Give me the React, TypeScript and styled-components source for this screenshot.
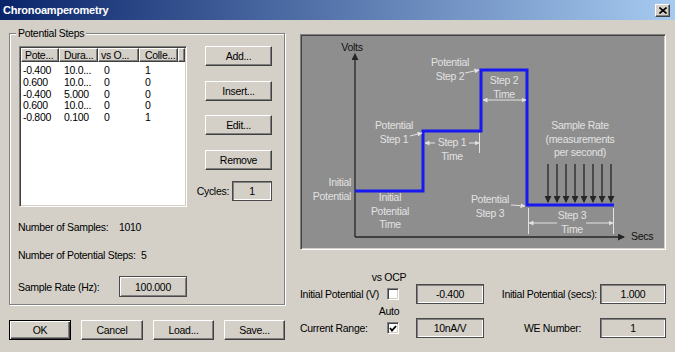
import React from 'react'
import styled, { createGlobalStyle } from 'styled-components'

const FACE = '#d4d0c8'

const GlobalStyle = createGlobalStyle`
  html, body {
    margin: 0;
    padding: 0;
    background: ${FACE};
  }
  body {
    font-family: 'Liberation Sans', Arial, sans-serif;
    font-size: 10.5px;
    letter-spacing: -0.3px;
    color: #000;
  }
`

const Window = styled.div`
  width: 675px;
  height: 352px;
  overflow: hidden;
  background: ${FACE};
  display: flex;
  flex-direction: column;
`

const TitleBar = styled.div`
  flex: none;
  height: 20px;
  display: flex;
  align-items: center;
  justify-content: space-between;
  padding: 0 5px 0 3px;
  background: linear-gradient(90deg, #0a246a 0%, #a6caf0 100%);
`

const Title = styled.span`
  color: #fff;
  font-weight: bold;
  font-size: 11px;
  letter-spacing: -0.2px;
`

const CloseBox = styled.div`
  width: 15px;
  height: 13px;
  box-sizing: border-box;
  display: flex;
  align-items: center;
  justify-content: center;
  background: ${FACE};
  border: 1px solid;
  border-color: #fff #404040 #404040 #fff;
  box-shadow: inset -1px -1px 0 #808080;
`

const Body = styled.div`
  display: flex;
  gap: 15px;
  padding: 13px 0 0 9px;
`

const LeftCol = styled.div`
  width: 276px;
  display: flex;
  flex-direction: column;
`

const GroupBox = styled.div`
  position: relative;
  height: 272px;
  box-sizing: border-box;
  padding: 12px 0 0 9px;
  border: 1px solid #808080;
  box-shadow: inset 1px 1px 0 #fff, 1px 1px 0 #fff;
`

const Legend = styled.span`
  position: absolute;
  top: -7px;
  left: 6px;
  padding: 0 2px;
  line-height: 13px;
  background: ${FACE};
`

const GroupTop = styled.div`
  display: flex;
  align-items: flex-start;
`

const ListView = styled.div`
  width: 168px;
  height: 161px;
  box-sizing: border-box;
  background: #fff;
  border: 1px solid;
  border-color: #808080 #fff #fff #808080;
  box-shadow: inset 1px 1px 0 #404040, inset -1px -1px 0 ${FACE};
  padding: 1px;
  overflow: hidden;
`

const COLS = '38px 39px 41px 39px 1fr'

const HeaderRow = styled.div`
  display: grid;
  grid-template-columns: ${COLS};
  height: 14px;
`

const HeaderCell = styled.div<{ $pad: number }>`
  box-sizing: border-box;
  padding-left: ${(p) => p.$pad}px;
  line-height: 12px;
  white-space: nowrap;
  overflow: hidden;
  background: ${FACE};
  border: 1px solid;
  border-color: #fff #404040 #404040 #fff;
  box-shadow: inset -1px -1px 0 #808080;
`

const Rows = styled.div`
  padding-top: 3px;
`

const DataRow = styled.div`
  display: grid;
  grid-template-columns: ${COLS};
  height: 11.75px;
  line-height: 11.75px;
`

const DataCell = styled.div<{ $pad: number }>`
  padding-left: ${(p) => p.$pad}px;
  white-space: nowrap;
`

const ButtonCol = styled.div`
  width: 67px;
  margin-left: 18px;
  display: flex;
  flex-direction: column;
`

const ButtonStack = styled.div`
  display: flex;
  flex-direction: column;
  gap: 14.5px;
`

const Button = styled.div<{ $default?: boolean; $width?: number }>`
  width: ${(p) => (p.$width ? `${p.$width}px` : '100%')};
  height: 20px;
  box-sizing: border-box;
  display: flex;
  align-items: center;
  justify-content: center;
  background: ${FACE};
  border: 1px solid;
  border-color: ${(p) => (p.$default ? '#000' : '#fff #404040 #404040 #fff')};
  box-shadow: ${(p) =>
    p.$default
      ? 'inset 1px 1px 0 #fff, inset -1px -1px 0 #404040, inset -2px -2px 0 #808080'
      : 'inset -1px -1px 0 #808080'};
`

const CyclesRow = styled.div`
  margin-top: 11px;
  display: flex;
  align-items: center;
  justify-content: flex-end;
  gap: 3px;
  & > * {
    flex: none;
  }
`

const Field = styled.div<{ $width?: number; $raised?: boolean }>`
  width: ${(p) => (p.$width ? `${p.$width}px` : '100%')};
  height: ${(p) => (p.$raised ? 21 : 20)}px;
  box-sizing: border-box;
  display: flex;
  align-items: center;
  justify-content: center;
  background: ${FACE};
  border: 1px solid #4a4a4a;
  box-shadow: ${(p) =>
    p.$raised
      ? 'inset 1px 1px 0 #fff, inset -1px -1px 0 #808080'
      : 'inset 1px 1px 0 #808080, inset -1px -1px 0 #fff'};
`

const StatList = styled.div`
  margin: 13px 0 0 -1px;
  display: flex;
  flex-direction: column;
  gap: 14px;
`

const StatRow = styled.div<{ $h: number }>`
  height: ${(p) => p.$h}px;
  display: flex;
  align-items: center;
`

const StatLabel = styled.span`
  width: 101px;
  flex: none;
`

const Footer = styled.div`
  margin-top: 15px;
  display: flex;
  justify-content: space-between;
`

const RightCol = styled.div`
  width: 366px;
  padding-top: 1px;
  display: flex;
  flex-direction: column;
`

const DiagramPanel = styled.div`
  height: 216px;
  box-sizing: border-box;
  background: #8e8e8e;
  border: 1px solid;
  border-color: #808080 #fff #fff #808080;
  box-shadow: inset 1px 1px 0 #404040, inset -1px -1px 0 ${FACE};
  & > svg {
    display: block;
    margin: 1px;
  }
`

const FormGrid = styled.div`
  margin-top: 22px;
  display: grid;
  grid-template-columns: 82px 34px 68px 1fr 66px;
  grid-template-rows: 12px 20px 14px 20px;
  align-items: center;
`

const Caption = styled.div<{ $row: number }>`
  grid-column: 2;
  grid-row: ${(p) => p.$row};
  width: 14px;
  display: flex;
  justify-content: center;
  white-space: nowrap;
  line-height: 13px;
  align-self: end;
`

const FormLabel = styled.div<{ $col: number; $row: number; $pad?: number }>`
  grid-column: ${(p) => p.$col};
  grid-row: ${(p) => p.$row};
  white-space: nowrap;
  text-align: ${(p) => (p.$col === 1 ? 'left' : 'right')};
  padding-right: ${(p) => p.$pad ?? 0}px;
`

const Check = styled.div<{ $row: number }>`
  grid-column: 2;
  grid-row: ${(p) => p.$row};
  margin-left: 5px;
  width: 12px;
  height: 12px;
  box-sizing: border-box;
  background: #fff;
  border: 1px solid;
  border-color: #808080 #fff #fff #808080;
  box-shadow: inset 1px 1px 0 #404040, inset -1px -1px 0 ${FACE};
  display: flex;
  align-items: center;
  justify-content: center;
`

const Slot = styled.div<{ $col: number; $row: number }>`
  grid-column: ${(p) => p.$col};
  grid-row: ${(p) => p.$row};
`

const steps = [
  ['-0.400', '10.0...', '0', '1'],
  ['0.600', '10.0...', '0', '0'],
  ['-0.400', '5.000', '0', '0'],
  ['0.600', '10.0...', '0', '0'],
  ['-0.800', '0.100', '0', '1'],
]

const headers = [
  { label: 'Pote...', pad: 3 },
  { label: 'Dura...', pad: 4 },
  { label: 'vs O...', pad: 2 },
  { label: 'Colle...', pad: 5 },
  { label: '', pad: 0 },
]

const dataPads = [2, 5, 6, 6]

const LIGHT = '#e2e2e2'
const DARK = '#262626'

interface LabelProps {
  x: number
  y: number
  lines: string[]
  anchor?: 'start' | 'middle' | 'end'
  fill?: string
}

const DiagramText = ({ x, y, lines, anchor = 'middle', fill = LIGHT }: LabelProps) => (
  <text
    x={x}
    y={y}
    textAnchor={anchor}
    fill={fill}
    fontFamily="'Liberation Sans', Arial, sans-serif"
    fontSize="10.5"
    letterSpacing="-0.3"
  >
    {lines.map((line, i) => (
      <tspan key={i} x={x} dy={i === 0 ? 0 : 13.7}>
        {line}
      </tspan>
    ))}
  </text>
)

const Arrow = ({
  x1,
  y1,
  x2,
  y2,
  color = LIGHT,
}: {
  x1: number
  y1: number
  x2: number
  y2: number
  color?: string
}) => (
  <line
    x1={x1}
    y1={y1}
    x2={x2}
    y2={y2}
    stroke={color}
    strokeWidth={color === LIGHT ? 1 : 1.3}
    markerEnd={color === LIGHT ? 'url(#ah-light)' : 'url(#ah-dark)'}
  />
)

const sampleArrows = Array.from({ length: 8 }, (_, i) => 248 + i * 9)

const Diagram = () => (
  <svg width="362" height="212" viewBox="2 2 362 212">
    <defs>
      <marker
        id="ah-dark"
        markerWidth="7"
        markerHeight="7"
        refX="6"
        refY="3.5"
        orient="auto"
        markerUnits="userSpaceOnUse"
      >
        <path d="M0,0 L7,3.5 L0,7 z" fill={DARK} />
      </marker>
      <marker
        id="ah-light"
        markerWidth="5"
        markerHeight="5"
        refX="4.5"
        refY="2.5"
        orient="auto"
        markerUnits="userSpaceOnUse"
      >
        <path d="M0,0 L5,2.5 L0,5 z" fill={LIGHT} />
      </marker>
    </defs>

    {/* axes */}
    <Arrow x1={55} y1={203} x2={55} y2={20} color={DARK} />
    <Arrow x1={55} y1={203} x2={324} y2={203} color={DARK} />
    <DiagramText x={52} y={17} lines={['Volts']} fill="#111" />
    <DiagramText x={331} y={206} lines={['Secs']} anchor="start" fill="#111" />

    {/* potential waveform */}
    <polyline
      points="55,157 123,157 123,97 181,97 181,36 227,36 227,171 314,171"
      fill="none"
      stroke="#1818f2"
      strokeWidth="3"
    />

    {/* step 2 */}
    <DiagramText x={150} y={32} lines={['Potential', 'Step 2']} />
    <Arrow x1={165} y1={39} x2={179} y2={36} />
    <DiagramText x={204} y={50} lines={['Step 2', 'Time']} />
    <Arrow x1={204} y1={66} x2={183} y2={66} />
    <Arrow x1={204} y1={66} x2={226} y2={66} />

    {/* step 1 */}
    <DiagramText x={94} y={95} lines={['Potential', 'Step 1']} />
    <Arrow x1={110} y1={102} x2={122} y2={99} />
    <DiagramText x={152} y={112} lines={['Step 1', 'Time']} />
    <Arrow x1={135} y1={109} x2={125} y2={109} />
    <Arrow x1={169} y1={109} x2={179} y2={109} />
    <line x1={179.5} y1={99} x2={179.5} y2={119} stroke={LIGHT} />

    {/* sample rate */}
    <DiagramText x={280} y={95} lines={['Sample Rate', '(measurements', 'per second)']} />
    {sampleArrows.map((x) => (
      <Arrow key={x} x1={x} y1={130} x2={x} y2={168} color={DARK} />
    ))}

    {/* initial potential */}
    <DiagramText x={51} y={152} lines={['Initial', 'Potential']} anchor="end" />
    <DiagramText x={90} y={167} lines={['Initial', 'Potential', 'Time']} />

    {/* step 3 */}
    <DiagramText x={190} y={169} lines={['Potential', 'Step 3']} />
    <Arrow x1={211} y1={171} x2={225} y2={172} />
    <DiagramText x={272} y={185} lines={['Step 3', 'Time']} />
    <Arrow x1={257} y1={189} x2={229} y2={189} />
    <Arrow x1={286} y1={189} x2={313} y2={189} />
    <line x1={228.5} y1={174} x2={228.5} y2={200} stroke={LIGHT} />
    <line x1={313.5} y1={174} x2={313.5} y2={200} stroke={LIGHT} />
  </svg>
)

const App = () => (
  <>
    <GlobalStyle />
    <Window>
      <TitleBar>
        <Title>Chronoamperometry</Title>
        <CloseBox>
          <svg width="8" height="7" viewBox="0 0 8 7">
            <path d="M0.5,0.5 L7.5,6.5 M7.5,0.5 L0.5,6.5" stroke="#000" strokeWidth="1.6" />
          </svg>
        </CloseBox>
      </TitleBar>

      <Body>
        <LeftCol>
          <GroupBox>
            <Legend>Potential Steps</Legend>
            <GroupTop>
              <ListView>
                <HeaderRow>
                  {headers.map((h, i) => (
                    <HeaderCell key={i} $pad={h.pad}>
                      {h.label}
                    </HeaderCell>
                  ))}
                </HeaderRow>
                <Rows>
                  {steps.map((row, r) => (
                    <DataRow key={r}>
                      {row.map((value, c) => (
                        <DataCell key={c} $pad={dataPads[c]}>
                          {value}
                        </DataCell>
                      ))}
                    </DataRow>
                  ))}
                </Rows>
              </ListView>

              <ButtonCol>
                <ButtonStack>
                  <Button>Add...</Button>
                  <Button>Insert...</Button>
                  <Button>Edit...</Button>
                  <Button>Remove</Button>
                </ButtonStack>
                <CyclesRow>
                  <span>Cycles:</span>
                  <Field $width={40}>1</Field>
                </CyclesRow>
              </ButtonCol>
            </GroupTop>

            <StatList>
              <StatRow $h={14}>
                <StatLabel>Number of Samples:</StatLabel>
                <span>1010</span>
              </StatRow>
              <StatRow $h={14}>Number of Potential Steps:&nbsp;&nbsp;5</StatRow>
              <StatRow $h={21}>
                <StatLabel>Sample Rate (Hz):</StatLabel>
                <Field $width={68} $raised>
                  100.000
                </Field>
              </StatRow>
            </StatList>
          </GroupBox>

          <Footer>
            <Button $default $width={62}>
              OK
            </Button>
            <Button $width={62}>Cancel</Button>
            <Button $width={61}>Load...</Button>
            <Button $width={61}>Save...</Button>
          </Footer>
        </LeftCol>

        <RightCol>
          <DiagramPanel>
            <Diagram />
          </DiagramPanel>

          <FormGrid>
            <Caption $row={1}>vs OCP</Caption>
            <FormLabel $col={1} $row={2}>
              Initial Potential (V)
            </FormLabel>
            <Check $row={2} />
            <Slot $col={3} $row={2}>
              <Field>-0.400</Field>
            </Slot>
            <FormLabel $col={4} $row={2} $pad={3}>
              Initial Potential (secs):
            </FormLabel>
            <Slot $col={5} $row={2}>
              <Field>1.000</Field>
            </Slot>

            <Caption $row={3}>Auto</Caption>
            <FormLabel $col={1} $row={4}>
              Current Range:
            </FormLabel>
            <Check $row={4}>
              <svg width="8" height="7" viewBox="0 0 8 7">
                <path d="M1,3 L3,5.5 L7,1" fill="none" stroke="#000" strokeWidth="1.8" />
              </svg>
            </Check>
            <Slot $col={3} $row={4}>
              <Field>10nA/V</Field>
            </Slot>
            <FormLabel $col={4} $row={4} $pad={19}>
              WE Number:
            </FormLabel>
            <Slot $col={5} $row={4}>
              <Field>1</Field>
            </Slot>
          </FormGrid>
        </RightCol>
      </Body>
    </Window>
  </>
)

export default App
